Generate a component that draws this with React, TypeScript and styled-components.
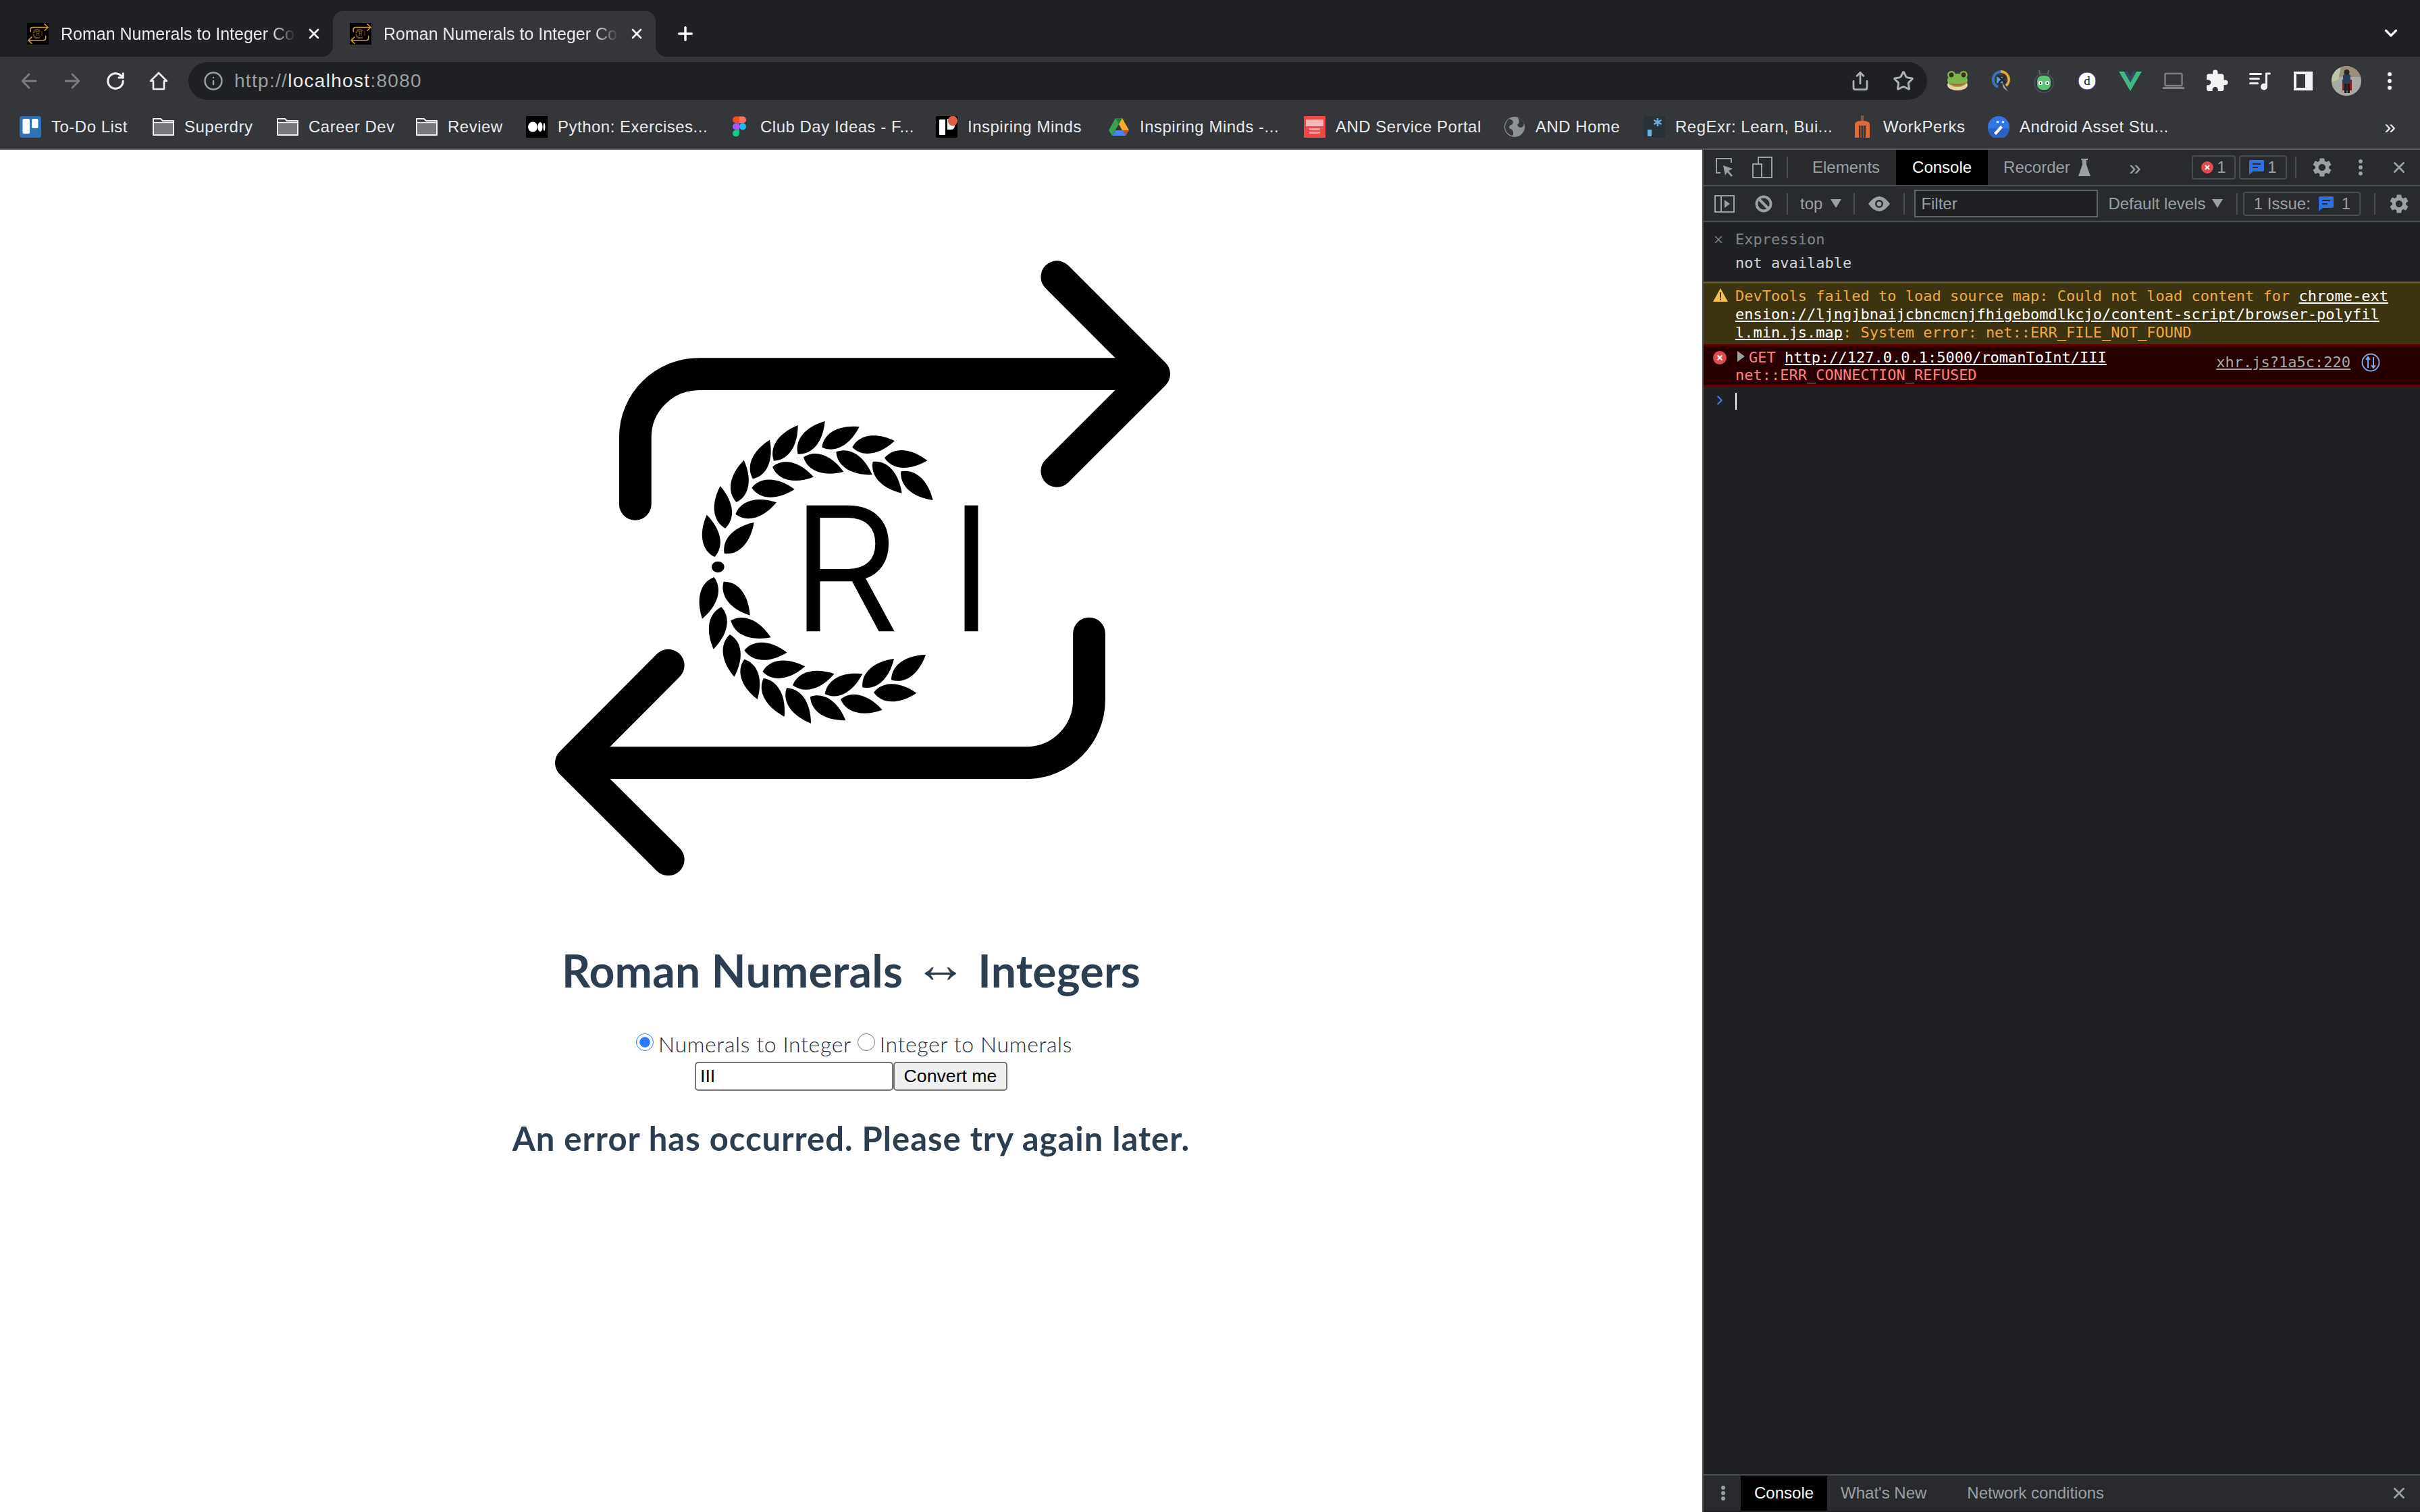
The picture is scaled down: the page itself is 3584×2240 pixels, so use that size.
import React from 'react';
import styled, { createGlobalStyle } from 'styled-components';
import { ArrowLeft, ArrowRight, ChevronDown, ChevronRight, Info, Plus, RotateCw, Share, Star, X } from 'lucide-react';
import { MdExtension, MdSettings } from 'react-icons/md';

const GlobalStyle = createGlobalStyle`
  html, body {
    margin: 0;
    padding: 0;
    background: #ffffff;
  }
  * {
    box-sizing: border-box;
  }
`;

const UI_FONT = '"Liberation Sans", Arial, sans-serif';
const MONO_FONT = '"DejaVu Sans Mono", monospace';

const Window = styled.div`
  width: 3584px;
  height: 2240px;
  display: flex;
  flex-direction: column;
  overflow: hidden;
  font-family: ${UI_FONT};
`;

/* ---------- tabs ---------- */

const TabStrip = styled.div`
  height: 84px;
  flex: none;
  background: #202124;
  display: flex;
  align-items: flex-end;
  padding-left: 15px;
`;

const Tab = styled.div<{ $active?: boolean }>`
  position: relative;
  width: 478px;
  height: 68px;
  display: flex;
  align-items: center;
  padding-left: 25px;
  border-radius: 16px 16px 0 0;
  background: ${(p) => (p.$active ? '#35363a' : 'transparent')};
  color: #e8eaed;

  ${(p) =>
    p.$active &&
    `
    &::before, &::after {
      content: '';
      position: absolute;
      bottom: 0;
      width: 16px;
      height: 16px;
    }
    &::before {
      left: -16px;
      background: radial-gradient(circle at 0 0, #202124 15.5px, #35363a 16.5px);
    }
    &::after {
      right: -16px;
      background: radial-gradient(circle at 100% 0, #202124 15.5px, #35363a 16.5px);
    }
  `}
`;

const FaviconBox = styled.span`
  width: 32px;
  height: 32px;
  flex: none;
  background: #000000;
  display: block;
`;

const TabTitle = styled.span`
  width: 348px;
  margin-left: 18px;
  font-size: 25px;
  line-height: 32px;
  white-space: nowrap;
  overflow: hidden;
  -webkit-mask-image: linear-gradient(to right, #000 90%, transparent 100%);
  mask-image: linear-gradient(to right, #000 90%, transparent 100%);
`;

const TabClose = styled.span`
  width: 24px;
  height: 24px;
  margin-left: 15px;
  display: flex;
  align-items: center;
  justify-content: center;
  color: #ffffff;
`;

const NewTab = styled.span`
  width: 32px;
  height: 32px;
  margin: 0 0 18px 28px;
  display: flex;
  align-items: center;
  justify-content: center;
  color: #ffffff;
`;

const TabMenu = styled.span`
  margin: 0 28px 20px auto;
  display: flex;
  color: #ffffff;
`;

/* ---------- toolbar ---------- */

const Toolbar = styled.div`
  height: 72px;
  flex: none;
  background: #35363a;
  display: flex;
  align-items: center;
  padding: 8px 12px 8px 11px;
`;

const ToolButton = styled.span<{ $dim?: boolean }>`
  width: 64px;
  height: 56px;
  flex: none;
  display: flex;
  align-items: center;
  justify-content: center;
  color: ${(p) => (p.$dim ? '#7b7d80' : '#f1f3f4')};
`;

const AddressBar = styled.div`
  width: 2575px;
  height: 56px;
  flex: none;
  margin: 0 13px 0 12px;
  padding: 0 0 0 22px;
  display: flex;
  align-items: center;
  border-radius: 28px;
  background: #202124;
  color: #9aa0a6;
`;

const UrlText = styled.div`
  margin-left: 16px;
  font-size: 28px;
  letter-spacing: 1.3px;
  color: #9aa0a6;

  b {
    font-weight: 400;
    color: #e8eaed;
  }
`;

const AddressActions = styled.div`
  margin-left: auto;
  display: flex;
  padding-right: 3px;
`;

const Avatar = styled.span`
  width: 44px;
  height: 44px;
  border-radius: 50%;
  overflow: hidden;
  display: block;
`;

/* ---------- bookmarks ---------- */

const BookmarkBar = styled.div`
  height: 66px;
  flex: none;
  background: #35363a;
  border-bottom: 2px solid #5c5d60;
  display: flex;
  align-items: center;
  padding-left: 29px;
  color: #e8eaed;
`;

const Bookmark = styled.div<{ $width: number }>`
  width: ${(p) => p.$width}px;
  flex: none;
  display: flex;
  align-items: center;
  gap: 15px;
  font-size: 24px;
  letter-spacing: 0.5px;
  white-space: nowrap;
`;

const BookmarkMore = styled.div`
  margin-left: auto;
  margin-right: 36px;
  font-size: 30px;
  line-height: 30px;
`;

/* ---------- page ---------- */

const Main = styled.div`
  flex: 1;
  min-height: 0;
  display: flex;
`;

const Page = styled.main`
  width: 2521px;
  flex: none;
  background: #ffffff;
  display: flex;
  flex-direction: column;
  align-items: center;
  color: #2c3e50;
  font-family: Lato, "Open Sans", sans-serif;
`;

const LogoWrap = styled.div`
  width: 960px;
  height: 960px;
  margin-top: 138px;
`;

const Heading = styled.h1`
  margin: 69px 0 0;
  height: 80px;
  font-size: 66px;
  line-height: 80px;
  font-weight: 700;
  letter-spacing: 0.3px;
  white-space: nowrap;
`;

const HeadingArrow = styled.span`
  font-family: ${UI_FONT};
  font-weight: 400;
  font-size: 78px;
  line-height: 1;
  vertical-align: 8px;
`;

const ModeRow = styled.div`
  margin-top: 50px;
  height: 54px;
  display: flex;
  align-items: center;
  font-size: 32px;
  font-weight: 300;
  letter-spacing: 0.6px;
  color: #1f2d3b;
`;

const ModeRadio = styled.input`
  width: 26px;
  height: 26px;
  margin: 0 7px 4px 9px;
  accent-color: #2b7bfa;
`;

const ConvertForm = styled.form`
  display: flex;
  margin: 0;
`;

const NumberInput = styled.input`
  width: 294px;
  height: 43px;
  padding: 2px 6px;
  border: 2px solid #767676;
  border-radius: 5px;
  background: #ffffff;
  font-family: ${UI_FONT};
  font-size: 26.67px;
  color: #000000;
`;

const ConvertButton = styled.button`
  width: 169px;
  height: 43px;
  padding: 0;
  border: 2px solid #767676;
  border-radius: 5px;
  background: #efefef;
  font-family: ${UI_FONT};
  font-size: 26.67px;
  color: #000000;
`;

const Message = styled.h2`
  margin: 41px 0 0;
  font-size: 49px;
  line-height: 58px;
  font-weight: 700;
  letter-spacing: 1px;
  white-space: nowrap;
`;

/* ---------- devtools ---------- */

const DevTools = styled.aside`
  flex: 1;
  min-width: 0;
  display: flex;
  flex-direction: column;
  background: #202124;
  border-left: 2px solid #494c50;
  color: #9aa0a6;
  font-size: 24px;
`;

const DevBar = styled.div<{ $height: number }>`
  height: ${(p) => p.$height}px;
  flex: none;
  display: flex;
  align-items: center;
  padding-left: 3px;
  background: #292a2d;
  border-bottom: 2px solid #494c50;
  white-space: nowrap;
`;

const DevIcon = styled.span<{ $width?: number; $ml?: number; $size?: number }>`
  width: ${(p) => p.$width ?? 56}px;
  margin-left: ${(p) => p.$ml ?? 0}px;
  height: 100%;
  flex: none;
  display: flex;
  align-items: center;
  justify-content: center;
  color: #9aa0a6;
  font-size: ${(p) => p.$size ?? 24}px;
`;

const DevSep = styled.span<{ $ml: number; $mr?: number }>`
  width: 2px;
  height: 32px;
  flex: none;
  margin-left: ${(p) => p.$ml}px;
  margin-right: ${(p) => p.$mr ?? 0}px;
  background: #494c50;
`;

const DevTab = styled.span<{ $active?: boolean; $pad?: number }>`
  height: 100%;
  flex: none;
  display: flex;
  align-items: center;
  padding: 0 ${(p) => p.$pad ?? 23}px;
  background: ${(p) => (p.$active ? '#000000' : 'transparent')};
  color: ${(p) => (p.$active ? '#ffffff' : '#9aa0a6')};
`;

const Badge = styled.span<{ $width: number; $ml: number; $gap?: number }>`
  width: ${(p) => p.$width}px;
  height: 36px;
  flex: none;
  margin-left: ${(p) => p.$ml}px;
  display: flex;
  align-items: center;
  justify-content: center;
  gap: ${(p) => p.$gap ?? 5}px;
  border: 2px solid #494c50;
  border-radius: 4px;
`;

const FilterBox = styled.span`
  width: 272px;
  height: 41px;
  flex: none;
  margin-left: 14px;
  padding-left: 8px;
  display: flex;
  align-items: center;
  border: 2px solid #5f6368;
  background: #202124;
  color: #9aa0a6;
`;

const Caret = styled.span<{ $ml: number }>`
  width: 0;
  height: 0;
  flex: none;
  margin-left: ${(p) => p.$ml}px;
  border-left: 8px solid transparent;
  border-right: 8px solid transparent;
  border-top: 13px solid #9aa0a6;
`;

const DevText = styled.span<{ $ml: number }>`
  flex: none;
  margin-left: ${(p) => p.$ml}px;
`;

const ConsoleBody = styled.div`
  flex: 1;
  min-height: 0;
  display: flex;
  flex-direction: column;
  font-family: ${MONO_FONT};
  font-size: 22px;
  line-height: 27px;
`;

const ExpressionBlock = styled.div`
  height: 88px;
  flex: none;
  position: relative;
  padding: 12px 0 0 47px;
  color: #80868b;
`;

const ExpressionValue = styled.div`
  margin-top: 8px;
  color: #d2d4d7;
`;

const ExpressionClose = styled.span`
  position: absolute;
  left: 13px;
  top: 17px;
  display: flex;
  color: #80868b;
`;

const LogRow = styled.div<{ $kind: 'warn' | 'error' }>`
  position: relative;
  flex: none;
  padding: ${(p) => (p.$kind === 'warn' ? '5px 0 4px 47px' : '4px 0 1px 47px')};
  background: ${(p) => (p.$kind === 'warn' ? '#3c3410' : '#290000')};
  border-top: 3px solid ${(p) => (p.$kind === 'warn' ? '#5f5515' : '#5c0000')};
  border-bottom: ${(p) => (p.$kind === 'error' ? '3px solid #5c0000' : '0')};
  color: ${(p) => (p.$kind === 'warn' ? '#eeaa44' : '#ff8080')};
  line-height: ${(p) => (p.$kind === 'warn' ? 27 : 26)}px;
  white-space: pre;

  a {
    color: #ffffff;
    text-decoration: underline;
  }
`;

const LogIcon = styled.span`
  position: absolute;
  left: 14px;
  top: 7px;
  display: flex;
`;

const LogSource = styled.span`
  position: absolute;
  right: 59px;
  top: 10px;
  display: flex;
  align-items: center;
  gap: 16px;
`;

const LogSourceLink = styled.span`
  color: #a7a9ad;
  text-decoration: underline;
`;

const ExpandArrow = styled.span`
  display: inline-block;
  width: 0;
  height: 0;
  margin: 0 6px 1px 3px;
  border-top: 8px solid transparent;
  border-bottom: 8px solid transparent;
  border-left: 11px solid #9aa0a6;
`;

const Prompt = styled.div`
  padding: 9px 0 0 47px;
  position: relative;
  height: 40px;
`;

const PromptCaret = styled.span`
  position: absolute;
  left: 13px;
  top: 9px;
  display: flex;
  color: #4b7bd0;
`;

const PromptCursor = styled.span`
  display: block;
  width: 2px;
  height: 25px;
  background: #ffffff;
`;

const DrawerBar = styled.div`
  height: 54px;
  flex: none;
  display: flex;
  align-items: center;
  background: #292a2d;
  border-top: 2px solid #494c50;
  margin-bottom: 2px;
  padding-left: 3px;
`;

const RightGroup = styled.div`
  margin-left: auto;
  height: 100%;
  display: flex;
  align-items: center;
  padding-right: 3px;
`;

/* ---------- drawings ---------- */

// base x, base y, tip x, tip y, traced off the wreath
const LEAVES: number[][] = [
  [175, 675, 140, 488], [222, 548, 200, 360], [272, 432, 305, 245], [345, 328, 420, 155],
  [438, 248, 545, 90], [545, 218, 665, 72], [652, 188, 818, 97], [787, 188, 975, 160],
  [930, 235, 1120, 247], [218, 660, 350, 522], [268, 485, 450, 433], [340, 368, 530, 375],
  [432, 275, 615, 320], [570, 232, 748, 297], [715, 208, 875, 310], [878, 252, 1007, 392],
  [1003, 295, 1145, 423], [172, 765, 120, 950], [205, 898, 170, 1085], [243, 1020, 262, 1208],
  [307, 1130, 365, 1308], [392, 1215, 485, 1385], [495, 1258, 603, 1415], [600, 1297, 757, 1402],
  [735, 1308, 920, 1355], [882, 1278, 1072, 1280], [215, 785, 332, 935], [247, 958, 425, 1033],
  [307, 1090, 497, 1100], [388, 1185, 577, 1162], [522, 1245, 707, 1195], [665, 1285, 832, 1195],
  [832, 1255, 972, 1128], [960, 1222, 1113, 1110],
];

const leafPath = ([ax, ay, bx, by]: number[]) => {
  const dx = bx - ax;
  const dy = by - ay;
  const len = Math.hypot(dx, dy);
  const nx = -dy / len;
  const ny = dx / len;
  const pt = (t: number, h: number) => `${(ax + dx * t + nx * h).toFixed(1)} ${(ay + dy * t + ny * h).toFixed(1)}`;
  return `M${ax} ${ay}C${pt(0.2, 52)} ${pt(0.6, 52)} ${bx} ${by}C${pt(0.6, -52)} ${pt(0.2, -52)} ${ax} ${ay}Z`;
};

const Logo: React.FC<{ color: string; arrows?: string }> = ({ color, arrows }) => (
  <svg width="100%" height="100%" viewBox="-31 0 1568 1568" aria-hidden="true" style={{ display: 'block' }}>
    <g fill="none" stroke={arrows ?? color} strokeWidth="78" strokeLinecap="round" strokeLinejoin="round">
      <path d="M230 632V470C230 385 300 317 385 317H1484" />
      <path d="M1250 82L1485 317L1250 552" />
      <path d="M1328 945V1105C1328 1190 1260 1258 1175 1258H76" />
      <path d="M310 1022L75 1258L310 1492" />
    </g>
    <g transform="translate(326.7 392) scale(0.5444)" fill={color}>
      {LEAVES.map((l) => (
        <path key={l.join()} d={leafPath(l)} />
      ))}
      <ellipse cx="190" cy="720" rx="28" ry="25" />
    </g>
    <g fill={color} stroke={color} strokeWidth="4" fontFamily="Inter, Lato, sans-serif" fontWeight="300" fontSize="412">
      <text x="607" y="938">R</text>
      <text x="989" y="938">I</text>
    </g>
  </svg>
);

const Favicon = () => (
  <FaviconBox>
    <Logo color="#9c7a3c" arrows="#d2973a" />
  </FaviconBox>
);

const HomeIcon = () => (
  <svg width="28" height="28" viewBox="0 0 28 28" fill="none" stroke="currentColor" strokeWidth="2.6" strokeLinejoin="round">
    <path d="M2 14L14 2L26 14H22V26H6V14Z" />
  </svg>
);

const FrogIcon = () => (
  <svg width="32" height="32" viewBox="0 0 32 32">
    <ellipse cx="16" cy="22" rx="15" ry="8" fill="#f1cfa8" />
    <ellipse cx="16" cy="15" rx="15" ry="10" fill="#7ab648" />
    <circle cx="7" cy="7" r="6" fill="#7ab648" />
    <circle cx="25" cy="7" r="6" fill="#7ab648" />
    <circle cx="7" cy="7" r="3.4" fill="#3b2a1c" />
    <circle cx="25" cy="7" r="3.4" fill="#3b2a1c" />
    <path d="M3 19Q16 27 29 19Q16 22 3 19Z" fill="#c8553d" />
  </svg>
);

const ProxyIcon = () => (
  <svg width="32" height="36" viewBox="0 0 32 36" fill="none">
    <path d="M16 4A12 12 0 0 1 24 25" stroke="#e0a93b" strokeWidth="4" />
    <path d="M16 4A12 12 0 0 0 12 27" stroke="#3d71b8" strokeWidth="4" />
    <rect x="10" y="12" width="9" height="9" fill="#4da3dc" />
    <path d="M13 11L23 21M23 11L13 21" stroke="#24262a" strokeWidth="2.5" />
    <path d="M18 20L27 34L20 28Z" fill="#a9acb0" />
  </svg>
);

const RobotIcon = () => (
  <svg width="32" height="36" viewBox="0 0 32 36" fill="none">
    <circle cx="16" cy="21" r="14" stroke="#4a5061" strokeWidth="1.5" />
    <path d="M10 8L9 2M22 8L23 2" stroke="#5c6273" strokeWidth="2" />
    <rect x="6" y="10" width="20" height="21" rx="8" fill="#5fc277" />
    <circle cx="11" cy="21" r="3" fill="#fff" />
    <circle cx="21" cy="21" r="3" fill="#fff" />
    <circle cx="11" cy="21" r="1.2" fill="#24262a" />
    <circle cx="21" cy="21" r="1.2" fill="#24262a" />
  </svg>
);

const DictIcon = () => (
  <svg width="28" height="28" viewBox="0 0 28 28">
    <circle cx="14" cy="14" r="13" fill="#ffffff" stroke="#5b3e9c" strokeWidth="1" />
    <text x="14" y="20" textAnchor="middle" fontFamily="Liberation Serif, serif" fontSize="19" fill="#111">d</text>
  </svg>
);

const VueIcon = () => (
  <svg width="34" height="30" viewBox="0 0 34 30">
    <path d="M0 1H8L17 17L26 1H34L17 30Z" fill="#41b883" />
    <path d="M8 1H13L17 8L21 1H26L17 17Z" fill="#35495e" />
  </svg>
);

const LaptopIcon = () => (
  <svg width="32" height="26" viewBox="0 0 32 26" fill="none">
    <rect x="3.5" y="2" width="25" height="18" rx="1.5" stroke="#7f8184" strokeWidth="2.4" />
    <rect x="0" y="22" width="32" height="3" fill="#7f8184" />
  </svg>
);

const QueueIcon = () => (
  <svg width="32" height="28" viewBox="0 0 32 28" fill="#f1f3f4">
    <rect x="0" y="2" width="19" height="3" rx="1.5" />
    <rect x="0" y="9" width="16" height="3" rx="1.5" />
    <rect x="0" y="16" width="14" height="3" rx="1.5" />
    <circle cx="22" cy="22.5" r="5" />
    <rect x="24" y="2" width="3" height="20" />
    <rect x="24" y="1.5" width="8" height="3" rx="1.5" />
  </svg>
);

const SidePanelIcon = () => (
  <svg width="28" height="28" viewBox="0 0 28 28">
    <path fillRule="evenodd" d="M0 0H28V28H0ZM4 4V24H17V4Z" fill="#f1f3f4" />
  </svg>
);

const DotsIcon: React.FC<{ size?: number; color?: string }> = ({ size = 20, color = 'currentColor' }) => (
  <svg width="6" height={size} viewBox={`0 0 6 ${size}`} fill={color}>
    <circle cx="3" cy="3" r="3" />
    <circle cx="3" cy={size / 2} r="3" />
    <circle cx="3" cy={size - 3} r="3" />
  </svg>
);

const AvatarArt = () => (
  <svg width="44" height="44" viewBox="0 0 44 44">
    <rect width="44" height="44" fill="#a9a9a6" />
    <rect width="44" height="16" fill="#9a8f7a" />
    <path d="M0 0L14 0L10 20L0 24Z" fill="#bcc5a8" />
    <rect x="16" y="20" width="14" height="16" fill="#8c1f24" />
    <rect x="17" y="12" width="11" height="14" rx="3" fill="#2b3c5b" />
    <circle cx="22.5" cy="9" r="4" fill="#2a2424" />
    <rect x="19" y="26" width="3.5" height="14" fill="#191c22" />
    <rect x="23.5" y="26" width="3.5" height="14" fill="#191c22" />
  </svg>
);

const FolderIcon = () => (
  <svg width="32" height="26" viewBox="0 0 32 26">
    <path d="M1 1H12L15 4H31V25H1Z" fill="#35363a" stroke="#f1f3f4" strokeWidth="2" strokeLinejoin="round" />
    <path d="M2 7H30V24H2Z" fill="#77787b" />
    <path d="M1 6.5H31" stroke="#f1f3f4" strokeWidth="1.5" />
  </svg>
);

const TrelloIcon = () => (
  <svg width="32" height="32" viewBox="0 0 32 32">
    <rect width="32" height="32" rx="4" fill="#2f73b7" />
    <rect x="4.5" y="4" width="10.5" height="22" rx="2" fill="#ffffff" />
    <rect x="18" y="4" width="9.5" height="14" rx="2" fill="#ffffff" />
  </svg>
);

const MediumIcon = () => (
  <svg width="32" height="32" viewBox="0 0 32 32">
    <rect width="32" height="32" fill="#000000" />
    <ellipse cx="10" cy="16" rx="7" ry="7.5" fill="#ffffff" />
    <ellipse cx="21" cy="16" rx="3.5" ry="7" fill="#ffffff" />
    <ellipse cx="27" cy="16" rx="1.4" ry="6" fill="#ffffff" />
  </svg>
);

const FigmaIcon = () => (
  <svg width="32" height="32" viewBox="0 0 32 32">
    <path d="M6 5.500A5 5 0 0 1 11 0.500H16V10.500H11A5 5 0 0 1 6 5.500Z" fill="#f24e1e" />
    <path d="M16 0.500H21A5 5 0 0 1 21 10.500H16Z" fill="#ff7262" />
    <path d="M6 15.500A5 5 0 0 1 11 10.500H16V20.500H11A5 5 0 0 1 6 15.500Z" fill="#a259ff" />
    <circle cx="21" cy="15.500" r="5" fill="#1abcfe" />
    <path d="M6 25.500A5 5 0 0 1 11 20.500H16V25.500A5 5 0 0 1 6 25.500Z" fill="#0acf83" />
  </svg>
);

const InspiringIcon = () => (
  <svg width="32" height="32" viewBox="0 0 32 32">
    <rect width="32" height="32" rx="2" fill="#000000" />
    <rect x="5" y="5" width="9" height="23" rx="1" fill="#ffffff" />
    <path d="M17 4H28V14Q28 20 22 20H17Z" fill="#ffffff" />
    <ellipse cx="25" cy="7" rx="7" ry="7.500" fill="#dc6048" />
  </svg>
);

const DriveIcon = () => (
  <svg width="32" height="32" viewBox="0 0 32 32">
    <path d="M11 3H21L31 21H21Z" fill="#f5ab2c" />
    <path d="M11 3L1 21L6 29L16 12Z" fill="#34a353" />
    <path d="M6 29H26L31 21H11Z" fill="#4285f4" />
    <path d="M11 3H21L16 12Z" fill="#188038" />
    <path d="M26 29L31 21H22Z" fill="#d9442f" />
  </svg>
);

const ServiceIcon = () => (
  <svg width="32" height="32" viewBox="0 0 32 32">
    <rect width="32" height="32" fill="#ee474a" />
    <rect x="3" y="5" width="26" height="10" fill="#f7b6b6" />
    <rect x="8" y="18" width="16" height="3" fill="#f7a1a1" />
    <rect x="8" y="23" width="16" height="3" fill="#f7a1a1" />
  </svg>
);

const GlobeIcon = () => (
  <svg width="32" height="32" viewBox="0 0 32 32">
    <circle cx="16" cy="16" r="15" fill="#8e9195" />
    <path d="M8 4Q16 6 13 12Q6 14 9 19Q15 19 14 28L11 29Q2 24 2 16Q3 8 8 4Z" fill="#35363a" />
    <path d="M21 2Q25 10 20 13Q24 20 29 15L30 11Q27 4 21 2Z" fill="#35363a" />
  </svg>
);

const RegexIcon = () => (
  <svg width="32" height="32" viewBox="0 0 32 32">
    <rect width="32" height="32" fill="#283238" />
    <rect x="6" y="20" width="6" height="10" fill="#70b0e0" />
    <path d="M21 3V15M15.500 6L26.500 12M26.500 6L15.500 12" stroke="#70b0e0" strokeWidth="2.500" />
  </svg>
);

const PerksIcon = () => (
  <svg width="32" height="34" viewBox="0 0 32 34" fill="none">
    <rect x="14" y="0" width="4" height="8" fill="#8b5a3c" />
    <path d="M5 33V13Q5 8 16 8Q27 8 27 13V33H21V15H11V33Z" fill="#e26a35" />
    <path d="M14 15V33M18 15V33" stroke="#8b4a2a" strokeWidth="2" />
  </svg>
);

const AndroidStudioIcon = () => (
  <svg width="32" height="32" viewBox="0 0 32 32">
    <circle cx="16" cy="16" r="16" fill="#3474e0" />
    <path d="M0 18H32A16 16 0 0 1 0 18Z" fill="#2a62c4" />
    <path d="M9 25L19 14L22 17L12 28Z" fill="#ffffff" />
    <path d="M13 7L16 10M16 7L13 10M21 7L24 10M24 7L21 10" stroke="#ffffff" strokeWidth="1.400" />
  </svg>
);

const InspectIcon = () => (
  <svg width="28" height="30" viewBox="0 0 28 30" fill="none" stroke="#9aa0a6" strokeWidth="2">
    <path d="M8 23H2V2H24V8" />
    <path d="M12 12L26 17L20 20L26 27L24 29L18 22L15 27Z" fill="#9aa0a6" stroke="none" />
  </svg>
);

const DeviceIcon = () => (
  <svg width="30" height="32" viewBox="0 0 30 32" fill="none" stroke="#9aa0a6" strokeWidth="2">
    <path d="M9 10V1H29V31H1V11H14V31" />
  </svg>
);

const FlaskIcon = () => (
  <svg width="18" height="26" viewBox="0 0 18 26" fill="#9aa0a6">
    <path d="M4 0H14V2H12V9L18 26H0L6 9V2H4Z" />
  </svg>
);

const ErrorDot: React.FC<{ size: number }> = ({ size }) => (
  <svg width={size} height={size} viewBox="0 0 20 20">
    <circle cx="10" cy="10" r="10" fill="#e04b4b" />
    <path d="M6.500 6.500L13.500 13.500M13.500 6.500L6.500 13.500" stroke="#ffffff" strokeWidth="2" />
  </svg>
);

const IssueIcon = () => (
  <svg width="22" height="22" viewBox="0 0 22 22">
    <path d="M0 2Q0 0 2 0H20Q22 0 22 2V15Q22 17 20 17H6L0 22Z" fill="#2f6fe0" />
    <rect x="5" y="5" width="12" height="2" fill="#292a2d" />
    <rect x="5" y="10" width="8" height="2" fill="#292a2d" />
  </svg>
);

const SidebarIcon = () => (
  <svg width="30" height="26" viewBox="0 0 30 26" fill="none" stroke="#9aa0a6" strokeWidth="2">
    <rect x="1" y="1" width="28" height="24" />
    <path d="M10 1V25" />
    <path d="M15 7L23 13L15 19Z" fill="#9aa0a6" stroke="none" />
  </svg>
);

const ClearIcon = () => (
  <svg width="26" height="26" viewBox="0 0 26 26" fill="none" stroke="#9aa0a6" strokeWidth="4">
    <circle cx="13" cy="13" r="10.500" />
    <path d="M6 6L20 20" />
  </svg>
);

const EyeIcon = () => (
  <svg width="32" height="22" viewBox="0 0 32 22">
    <path fillRule="evenodd" fill="#9aa0a6" d="M0 11Q8 0 16 0Q24 0 32 11Q24 22 16 22Q8 22 0 11ZM16 5A6 6 0 1 0 16 17A6 6 0 1 0 16 5Z" />
    <circle cx="16" cy="11" r="3.500" fill="#9aa0a6" />
  </svg>
);

const WarnIcon = () => (
  <svg width="22" height="20" viewBox="0 0 22 20">
    <path d="M11 0L22 20H0Z" fill="#f5c04d" />
    <rect x="10" y="6" width="2" height="8" fill="#3c3410" />
    <rect x="10" y="15.500" width="2" height="2" fill="#3c3410" />
  </svg>
);

const SourceIcon = () => (
  <svg width="28" height="28" viewBox="0 0 28 28" fill="none" stroke="#7da7ef" strokeWidth="2">
    <circle cx="14" cy="14" r="12.500" />
    <path d="M10 6V22M7 10L10 6L13 10M18 22V6M15 18L18 22L21 18" />
  </svg>
);

/* ---------- data ---------- */

const BOOKMARKS: [React.ReactNode, string, number][] = [
  [<TrelloIcon />, 'To-Do List', 197],
  [<FolderIcon />, 'Superdry', 184],
  [<FolderIcon />, 'Career Dev', 206],
  [<FolderIcon />, 'Review', 163],
  [<MediumIcon />, 'Python: Exercises...', 300],
  [<FigmaIcon />, 'Club Day Ideas - F...', 307],
  [<InspiringIcon />, 'Inspiring Minds', 255],
  [<DriveIcon />, 'Inspiring Minds -...', 290],
  [<ServiceIcon />, 'AND Service Portal', 296],
  [<GlobeIcon />, 'AND Home', 207],
  [<RegexIcon />, 'RegExr: Learn, Bui...', 308],
  [<PerksIcon />, 'WorkPerks', 202],
  [<AndroidStudioIcon />, 'Android Asset Stu...', 280],
];

const TITLE = 'Roman Numerals to Integer Con';

const App: React.FC = () => (
  <Window>
    <GlobalStyle />
    <TabStrip>
      <Tab>
        <Favicon />
        <TabTitle>{TITLE}</TabTitle>
        <TabClose><X size={24} strokeWidth={2.6} /></TabClose>
      </Tab>
      <Tab $active>
        <Favicon />
        <TabTitle>{TITLE}</TabTitle>
        <TabClose><X size={24} strokeWidth={2.6} /></TabClose>
      </Tab>
      <NewTab><Plus size={32} strokeWidth={2.6} /></NewTab>
      <TabMenu><ChevronDown size={30} strokeWidth={2.6} /></TabMenu>
    </TabStrip>

    <Toolbar>
      <ToolButton $dim><ArrowLeft size={34} strokeWidth={2} /></ToolButton>
      <ToolButton $dim><ArrowRight size={34} strokeWidth={2} /></ToolButton>
      <ToolButton><RotateCw size={30} strokeWidth={2.4} /></ToolButton>
      <ToolButton><HomeIcon /></ToolButton>
      <AddressBar>
        <Info size={30} strokeWidth={2} />
        <UrlText>http://<b>localhost</b>:8080</UrlText>
        <AddressActions>
          <ToolButton $dim><Share size={30} strokeWidth={2.2} color="#b0b3b6" /></ToolButton>
          <ToolButton $dim><Star size={32} strokeWidth={2.2} color="#b0b3b6" /></ToolButton>
        </AddressActions>
      </AddressBar>
      <ToolButton><FrogIcon /></ToolButton>
      <ToolButton><ProxyIcon /></ToolButton>
      <ToolButton><RobotIcon /></ToolButton>
      <ToolButton><DictIcon /></ToolButton>
      <ToolButton><VueIcon /></ToolButton>
      <ToolButton><LaptopIcon /></ToolButton>
      <ToolButton><MdExtension size={36} /></ToolButton>
      <ToolButton><QueueIcon /></ToolButton>
      <ToolButton><SidePanelIcon /></ToolButton>
      <ToolButton><Avatar><AvatarArt /></Avatar></ToolButton>
      <ToolButton><DotsIcon size={26} /></ToolButton>
    </Toolbar>

    <BookmarkBar>
      {BOOKMARKS.map(([icon, label, width]) => (
        <Bookmark key={label} $width={width}>
          {icon}
          <span>{label}</span>
        </Bookmark>
      ))}
      <BookmarkMore>»</BookmarkMore>
    </BookmarkBar>

    <Main>
      <Page>
        <LogoWrap><Logo color="#000000" /></LogoWrap>
        <Heading>Roman Numerals <HeadingArrow>↔</HeadingArrow> Integers</Heading>
        <ModeRow>
          <ModeRadio type="radio" name="mode" defaultChecked />
          Numerals to Integer
          <ModeRadio type="radio" name="mode" />
          Integer to Numerals
        </ModeRow>
        <ConvertForm>
          <NumberInput type="text" defaultValue="III" />
          <ConvertButton type="button">Convert me</ConvertButton>
        </ConvertForm>
        <Message>An error has occurred. Please try again later.</Message>
      </Page>

      <DevTools>
        <DevBar $height={54}>
          <DevIcon><InspectIcon /></DevIcon>
          <DevIcon><DeviceIcon /></DevIcon>
          <DevSep $ml={8} $mr={12} />
          <DevTab $pad={24}>Elements</DevTab>
          <DevTab $active $pad={24}>Console</DevTab>
          <DevTab $pad={23}>
            Recorder
            <DevIcon $width={18} $ml={12}><FlaskIcon /></DevIcon>
          </DevTab>
          <DevIcon $width={24} $ml={31} $size={32}>»</DevIcon>
          <RightGroup>
            <Badge $width={65} $ml={0}><ErrorDot size={18} />1</Badge>
            <Badge $width={71} $ml={5}><IssueIcon />1</Badge>
            <DevSep $ml={12} />
            <DevIcon $width={56} $ml={10}><MdSettings size={34} /></DevIcon>
            <DevIcon $width={56} $ml={1}><DotsIcon size={24} /></DevIcon>
            <DevIcon $width={56} $ml={1}><X size={26} strokeWidth={2.6} /></DevIcon>
          </RightGroup>
        </DevBar>

        <DevBar $height={53}>
          <DevIcon><SidebarIcon /></DevIcon>
          <DevIcon $width={60}><ClearIcon /></DevIcon>
          <DevSep $ml={4} />
          <DevText $ml={18}>top</DevText>
          <Caret $ml={12} />
          <DevSep $ml={18} />
          <DevIcon $width={72}><EyeIcon /></DevIcon>
          <DevSep $ml={0} />
          <FilterBox>Filter</FilterBox>
          <DevText $ml={15}>Default levels</DevText>
          <Caret $ml={10} />
          <DevSep $ml={20} />
          <Badge $width={174} $ml={8} $gap={12}>1 Issue:<IssueIcon />1</Badge>
          <DevSep $ml={20} />
          <RightGroup>
            <DevIcon $width={56}><MdSettings size={34} /></DevIcon>
          </RightGroup>
        </DevBar>

        <ConsoleBody>
          <ExpressionBlock>
            <ExpressionClose><X size={18} strokeWidth={2} /></ExpressionClose>
            Expression
            <ExpressionValue>not available</ExpressionValue>
          </ExpressionBlock>
          <LogRow $kind="warn">
            <LogIcon><WarnIcon /></LogIcon>
            DevTools failed to load source map: Could not load content for <a>chrome-ext{'\n'}ension://ljngjbnaijcbncmcnjfhigebomdlkcjo/content-script/browser-polyfil{'\n'}l.min.js.map</a>: System error: net::ERR_FILE_NOT_FOUND
          </LogRow>
          <LogRow $kind="error">
            <LogIcon><ErrorDot size={20} /></LogIcon>
            <ExpandArrow />GET <a>http://127.0.0.1:5000/romanToInt/III</a>
            <LogSource>
              <LogSourceLink>xhr.js?1a5c:220</LogSourceLink>
              <SourceIcon />
            </LogSource>
            {'\n'}net::ERR_CONNECTION_REFUSED
          </LogRow>
          <Prompt>
            <PromptCaret><ChevronRight size={22} strokeWidth={2.4} /></PromptCaret>
            <PromptCursor />
          </Prompt>
        </ConsoleBody>

        <DrawerBar>
          <DevIcon $width={52}><DotsIcon size={22} /></DevIcon>
          <DevTab $active $pad={20}>Console</DevTab>
          <DevTab $pad={20}>What&apos;s New</DevTab>
          <DevTab $pad={40}>Network conditions</DevTab>
          <RightGroup>
            <DevIcon $width={56}><X size={26} strokeWidth={2.6} /></DevIcon>
          </RightGroup>
        </DrawerBar>
      </DevTools>
    </Main>
  </Window>
);

export default App;
